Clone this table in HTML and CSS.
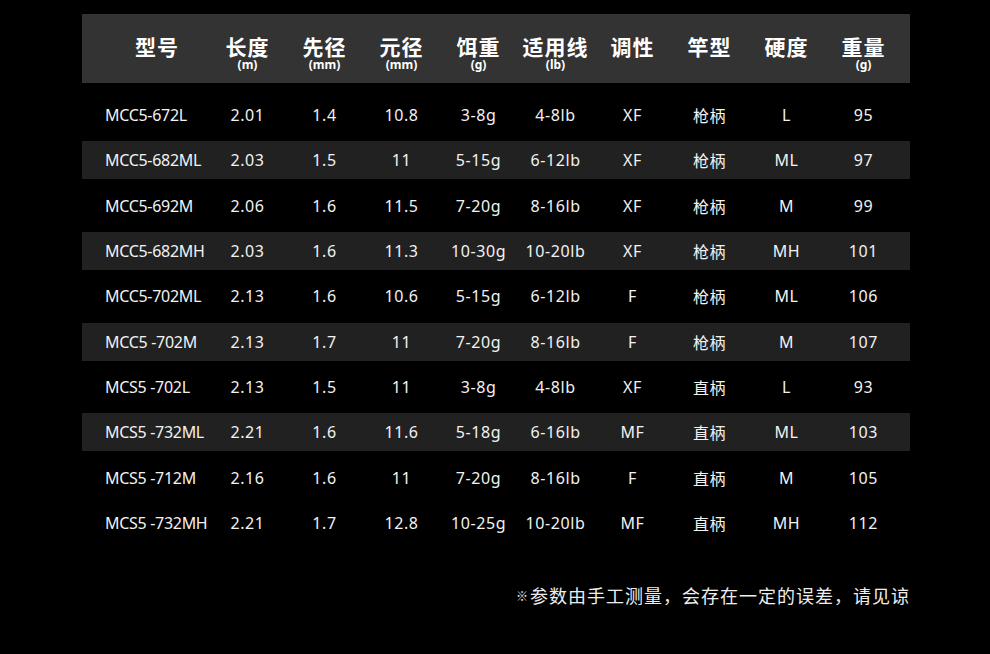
FILE: index.html
```html
<!DOCTYPE html>
<html lang="zh">
<head>
<meta charset="utf-8">
<title>参数表</title>
<link rel="stylesheet" href="styles.css">
</head>
<body>
<div class="page">
  <div class="table">
    <div class="head">
      <div class="hc first"><span class="main">型号</span></div>
      <div class="hc"><span class="main">长度</span><span class="unit">(m)</span></div>
      <div class="hc"><span class="main">先径</span><span class="unit">(mm)</span></div>
      <div class="hc"><span class="main">元径</span><span class="unit">(mm)</span></div>
      <div class="hc"><span class="main">饵重</span><span class="unit">(g)</span></div>
      <div class="hc"><span class="main">适用线</span><span class="unit">(lb)</span></div>
      <div class="hc"><span class="main">调性</span></div>
      <div class="hc"><span class="main">竿型</span></div>
      <div class="hc"><span class="main">硬度</span></div>
      <div class="hc"><span class="main">重量</span><span class="unit">(g)</span></div>
    </div>
    <div class="rows">
      <div class="row"><div class="c first">MCC5-672L</div><div class="c">2.01</div><div class="c">1.4</div><div class="c">10.8</div><div class="c">3-8g</div><div class="c">4-8lb</div><div class="c">XF</div><div class="c">枪柄</div><div class="c">L</div><div class="c">95</div></div>
      <div class="row alt"><div class="c first">MCC5-682ML</div><div class="c">2.03</div><div class="c">1.5</div><div class="c">11</div><div class="c">5-15g</div><div class="c">6-12lb</div><div class="c">XF</div><div class="c">枪柄</div><div class="c">ML</div><div class="c">97</div></div>
      <div class="row"><div class="c first">MCC5-692M</div><div class="c">2.06</div><div class="c">1.6</div><div class="c">11.5</div><div class="c">7-20g</div><div class="c">8-16lb</div><div class="c">XF</div><div class="c">枪柄</div><div class="c">M</div><div class="c">99</div></div>
      <div class="row alt"><div class="c first">MCC5-682MH</div><div class="c">2.03</div><div class="c">1.6</div><div class="c">11.3</div><div class="c">10-30g</div><div class="c">10-20lb</div><div class="c">XF</div><div class="c">枪柄</div><div class="c">MH</div><div class="c">101</div></div>
      <div class="row"><div class="c first">MCC5-702ML</div><div class="c">2.13</div><div class="c">1.6</div><div class="c">10.6</div><div class="c">5-15g</div><div class="c">6-12lb</div><div class="c">F</div><div class="c">枪柄</div><div class="c">ML</div><div class="c">106</div></div>
      <div class="row alt"><div class="c first">MCC5 -702M</div><div class="c">2.13</div><div class="c">1.7</div><div class="c">11</div><div class="c">7-20g</div><div class="c">8-16lb</div><div class="c">F</div><div class="c">枪柄</div><div class="c">M</div><div class="c">107</div></div>
      <div class="row"><div class="c first">MCS5 -702L</div><div class="c">2.13</div><div class="c">1.5</div><div class="c">11</div><div class="c">3-8g</div><div class="c">4-8lb</div><div class="c">XF</div><div class="c">直柄</div><div class="c">L</div><div class="c">93</div></div>
      <div class="row alt"><div class="c first">MCS5 -732ML</div><div class="c">2.21</div><div class="c">1.6</div><div class="c">11.6</div><div class="c">5-18g</div><div class="c">6-16lb</div><div class="c">MF</div><div class="c">直柄</div><div class="c">ML</div><div class="c">103</div></div>
      <div class="row"><div class="c first">MCS5 -712M</div><div class="c">2.16</div><div class="c">1.6</div><div class="c">11</div><div class="c">7-20g</div><div class="c">8-16lb</div><div class="c">F</div><div class="c">直柄</div><div class="c">M</div><div class="c">105</div></div>
      <div class="row"><div class="c first">MCS5 -732MH</div><div class="c">2.21</div><div class="c">1.7</div><div class="c">12.8</div><div class="c">10-25g</div><div class="c">10-20lb</div><div class="c">MF</div><div class="c">直柄</div><div class="c">MH</div><div class="c">112</div></div>
    </div>
  </div>
  <p class="note"><span class="mark">※</span>参数由手工测量，会存在一定的误差，请见谅</p>
</div>
</body>
</html>
```
FILE: styles.css
```css
html, body {
  margin: 0;
  padding: 0;
  background: #000;
}
body {
  width: 990px;
  height: 654px;
  overflow: hidden;
  font-family: "Noto Sans", "Noto Sans CJK SC", sans-serif;
  color: #f2f2f2;
}
.page {
  padding: 14px 80px 0 82px;
}
.table {
  width: 828px;
}
.head,
.row {
  display: grid;
  grid-template-columns: 127px repeat(9, 77px) 8px;
}
.head {
  height: 69px;
  background: #333;
}
.hc {
  display: flex;
  flex-direction: column;
  align-items: center;
  padding-top: 20px;
  color: #fff;
}
.hc.first {
  padding-left: 23px;
}
.main {
  font-family: "Noto Sans CJK SC", sans-serif;
  font-weight: 700;
  font-size: 21px;
  line-height: 24px;
  letter-spacing: 1px;
}
.unit {
  font-family: "Noto Sans", "Noto Sans CJK SC", sans-serif;
  font-weight: 700;
  font-size: 12px;
  line-height: 12px;
  margin-top: 1px;
}
.rows {
  display: flex;
  flex-direction: column;
  gap: 7.33px;
  padding-top: 13px;
}
.row {
  height: 38px;
  align-items: center;
  font-size: 16px;
}
.row.alt {
  background: #212121;
}
.c {
  text-align: center;
  white-space: nowrap;
  letter-spacing: 0.6px;
}
.c.first {
  text-align: left;
  padding-left: 23px;
  letter-spacing: -0.3px;
}
.note {
  margin: 41px 0 0;
  width: 828px;
  text-align: right;
  font-family: "Noto Sans CJK SC", sans-serif;
  font-size: 18px;
  line-height: 24px;
  letter-spacing: 1px;
  color: #eee;
}
.mark {
  font-size: 12px;
  vertical-align: 2px;
  margin-right: 1px;
}
```
